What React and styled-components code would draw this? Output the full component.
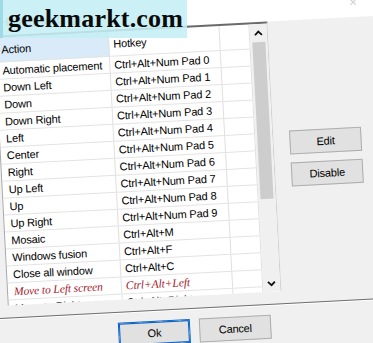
import React from "react"
import styled, { createGlobalStyle } from "styled-components"

const GlobalStyle = createGlobalStyle`
  html, body {
    margin: 0;
    padding: 0;
    overflow: hidden;
    background: #f0f0f0;
  }
  body {
    width: 373px;
    height: 343px;
    font-family: "Liberation Sans", Arial, sans-serif;
  }
`

const rows = [
  ["Automatic placement", "Ctrl+Alt+Num Pad 0"],
  ["Down Left", "Ctrl+Alt+Num Pad 1"],
  ["Down", "Ctrl+Alt+Num Pad 2"],
  ["Down Right", "Ctrl+Alt+Num Pad 3"],
  ["Left", "Ctrl+Alt+Num Pad 4"],
  ["Center", "Ctrl+Alt+Num Pad 5"],
  ["Right", "Ctrl+Alt+Num Pad 6"],
  ["Up Left", "Ctrl+Alt+Num Pad 7"],
  ["Up", "Ctrl+Alt+Num Pad 8"],
  ["Up Right", "Ctrl+Alt+Num Pad 9"],
  ["Mosaic", "Ctrl+Alt+M"],
  ["Windows fusion", "Ctrl+Alt+F"],
  ["Close all window", "Ctrl+Alt+C"],
  ["Move to Left screen", "Ctrl+Alt+Left", true],
  ["Move to Right screen", "Ctrl+Alt+Right"],
]

const Page = styled.div`
  position: relative;
  width: 373px;
  height: 343px;
  overflow: hidden;
`

// the screenshot is photographed slightly tilted
const Dialog = styled.div`
  margin: -20px;
  padding: 0 20px 20px;
  width: 373px;
  height: 363px;
  background: #f0f0f0;
  transform: rotate(-3deg);
  display: flex;
  flex-direction: column;
`

const TitleBar = styled.div`
  margin: 0 -20px;
  padding: 20px 20px 0 28px;
  height: 27px;
  background: #ffffff;
  display: flex;
  align-items: center;
  justify-content: space-between;
  font-size: 12px;
  color: #8a8a8a;
  span:last-child {
    margin-right: 8px;
    margin-top: -4px;
    font-size: 10px;
    color: #cfcfcf;
  }
`

const Body = styled.div`
  display: flex;
  align-items: flex-start;
`

const Table = styled.div`
  margin-left: 1px;
  width: 274px;
  height: 270px;
  box-sizing: border-box;
  border-top: 2px solid #6a6a6a;
  border-left: 1px solid #a8a8a8;
  border-right: 1px solid #d0d0d0;
  background: #ffffff;
  display: flex;
  overflow: hidden;
`

const Grid = styled.div`
  flex: 1;
  display: flex;
  flex-direction: column;
`

const Row = styled.div`
  display: grid;
  grid-template-columns: 114px 111px 1fr;
  height: ${(p) => (p.$header ? "25px" : "17px")};
  flex-shrink: 0;
`

const Cell = styled.div`
  border-right: 1px solid #e0e0e0;
  border-bottom: 1px solid #e3e3e3;
  padding-left: ${(p) => (p.$first ? "6px" : "4px")};
  font-size: 11px;
  letter-spacing: ${(p) => (p.$hotkey ? "-0.15px" : "-0.15px")};
  line-height: ${(p) => (p.$header ? "24px" : "17px")};
  white-space: nowrap;
  overflow: hidden;
  color: #000;
  background: ${(p) => (p.$sorted ? "#d9ebf8" : "transparent")};
  ${(p) =>
    p.$red &&
    `
    font-family: "Liberation Serif", "Times New Roman", serif;
    font-style: italic;
    font-size: 11.5px;
    letter-spacing: -0.1px;
    color: #a3172a;
  `}
`

const Scrollbar = styled.div`
  width: 17px;
  flex-shrink: 0;
  background: #f0f0f0;
  display: flex;
  flex-direction: column;
`

const Arrow = styled.div`
  height: 17px;
  flex-shrink: 0;
  display: flex;
  align-items: center;
  justify-content: center;
`

const Track = styled.div`
  flex: 1;
  padding: 1px 2px;
  display: flex;
  flex-direction: column;
`

const Thumb = styled.div`
  height: 157px;
  background: #cdcdcd;
`

const Side = styled.div`
  margin-left: 16px;
  padding-top: 110px;
  display: flex;
  flex-direction: column;
  gap: 8px;
`

const Button = styled.button`
  width: 72px;
  height: 24px;
  box-sizing: border-box;
  border: 1px solid ${(p) => (p.$primary ? "#0a64c8" : "#adadad")};
  box-shadow: ${(p) => (p.$primary ? "inset 0 0 0 1px #0a64c8" : "none")};
  background: #e1e1e1;
  font-family: "Liberation Sans", Arial, sans-serif;
  font-size: 11px;
  letter-spacing: -0.2px;
  color: #000;
  padding: 0;
`

const Footer = styled.div`
  margin: 12px -20px 0;
  padding: 10px 20px 0;
  border-top: 1px solid #6e6e6e;
  box-shadow: inset 0 1px 0 #ffffff;
  display: flex;
  justify-content: center;
  gap: 9px;
`

const Watermark = styled.div`
  position: absolute;
  left: 0;
  top: 0;
  width: 187px;
  height: 38px;
  box-sizing: border-box;
  border-left: 3px solid #9fdbe6;
  background: rgba(196, 238, 244, 0.88);
  padding-left: 5px;
  font-family: "Liberation Serif", "Times New Roman", serif;
  font-weight: bold;
  font-size: 26px;
  line-height: 38px;
  color: #0a0a0a;
  letter-spacing: 0.2px;
`

const Chevron = ({ up }) => (
  <svg width="9" height="6" viewBox="0 0 9 6">
    <polyline
      points={up ? "1,5 4.5,1.5 8,5" : "1,1 4.5,4.5 8,1"}
      fill="none"
      stroke="#111"
      strokeWidth="1.8"
    />
  </svg>
)

export default function App() {
  return (
    <Page>
      <GlobalStyle />
      <Dialog>
        <TitleBar>
          <span>Hotkey settings</span>
          <span>✕</span>
        </TitleBar>
        <Body>
          <Table>
            <Grid>
              <Row $header>
                <Cell $header $first $sorted>
                  Action
                </Cell>
                <Cell $header>Hotkey</Cell>
                <Cell $header />
              </Row>
              {rows.map(([action, key, red]) => (
                <Row key={action}>
                  <Cell $first $red={red}>
                    {action}
                  </Cell>
                  <Cell $hotkey $red={red}>
                    {key}
                  </Cell>
                  <Cell />
                </Row>
              ))}
            </Grid>
            <Scrollbar>
              <Arrow>
                <Chevron up />
              </Arrow>
              <Track>
                <Thumb />
              </Track>
              <Arrow>
                <Chevron />
              </Arrow>
            </Scrollbar>
          </Table>
          <Side>
            <Button>Edit</Button>
            <Button>Disable</Button>
          </Side>
        </Body>
        <Footer>
          <Button $primary>Ok</Button>
          <Button>Cancel</Button>
        </Footer>
      </Dialog>
      <Watermark>geekmarkt.com</Watermark>
    </Page>
  )
}
